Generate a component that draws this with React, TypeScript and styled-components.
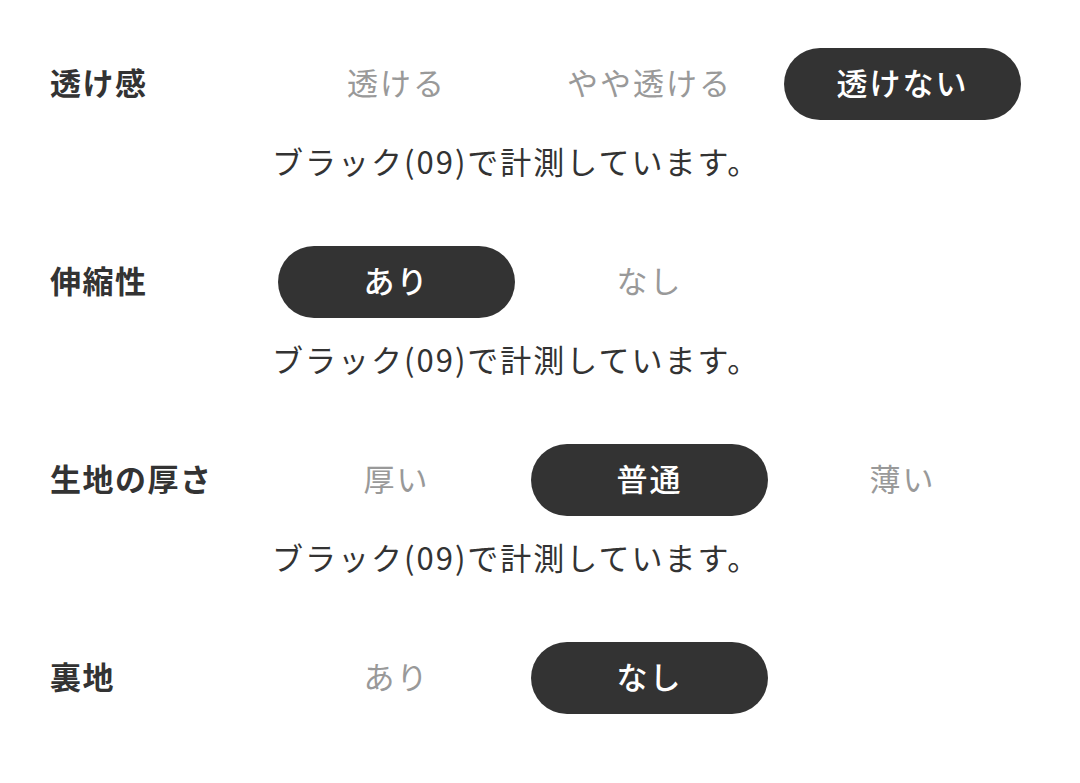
import React from 'react';
import styled, { createGlobalStyle } from 'styled-components';

const GlobalStyle = createGlobalStyle`
  html, body {
    margin: 0;
    padding: 0;
    background: #ffffff;
  }
  body {
    font-family: "Noto Sans CJK JP", "Noto Sans", sans-serif;
    color: #333333;
  }
`;

const Container = styled.div`
  padding: 48px 0 0 50px;
`;

const Section = styled.section`
  display: grid;
  grid-template-columns: 212px repeat(3, 237px);
  column-gap: 16px;
  margin-bottom: 65px;
`;

const Label = styled.h3`
  margin: 0;
  height: 72px;
  box-sizing: border-box;
  padding-bottom: 5px;
  display: flex;
  align-items: center;
  font-size: 31px;
  font-weight: 700;
  color: #333333;
  letter-spacing: 1.5px;
`;

const Option = styled.button<{ $active: boolean }>`
  height: 72px;
  box-sizing: border-box;
  border: none;
  border-radius: 36px;
  padding: 0 0 5px;
  display: flex;
  align-items: center;
  justify-content: center;
  font-family: inherit;
  font-size: 31px;
  font-weight: ${(p) => (p.$active ? 500 : 400)};
  letter-spacing: 2px;
  background: ${(p) => (p.$active ? '#333333' : 'transparent')};
  color: ${(p) => (p.$active ? '#ffffff' : '#999999')};
  cursor: pointer;
`;

const Note = styled.p`
  grid-column: 2 / 5;
  margin: 21px 0 0 -6px;
  line-height: 40px;
  font-size: 31px;
  letter-spacing: 2px;
  color: #333333;
`;

type Item = {
  label: string;
  options: string[];
  selected: number;
  note?: string;
};

const items: Item[] = [
  { label: '透け感', options: ['透ける', 'やや透ける', '透けない'], selected: 2, note: 'ブラック(09)で計測しています。' },
  { label: '伸縮性', options: ['あり', 'なし'], selected: 0, note: 'ブラック(09)で計測しています。' },
  { label: '生地の厚さ', options: ['厚い', '普通', '薄い'], selected: 1, note: 'ブラック(09)で計測しています。' },
  { label: '裏地', options: ['あり', 'なし'], selected: 1 },
];

export default function App() {
  return (
    <>
      <GlobalStyle />
      <Container>
        {items.map((item) => (
          <Section key={item.label}>
            <Label>{item.label}</Label>
            {item.options.map((opt, i) => (
              <Option key={opt} $active={i === item.selected}>
                {opt}
              </Option>
            ))}
            {item.note && <Note>{item.note}</Note>}
          </Section>
        ))}
      </Container>
    </>
  );
}
